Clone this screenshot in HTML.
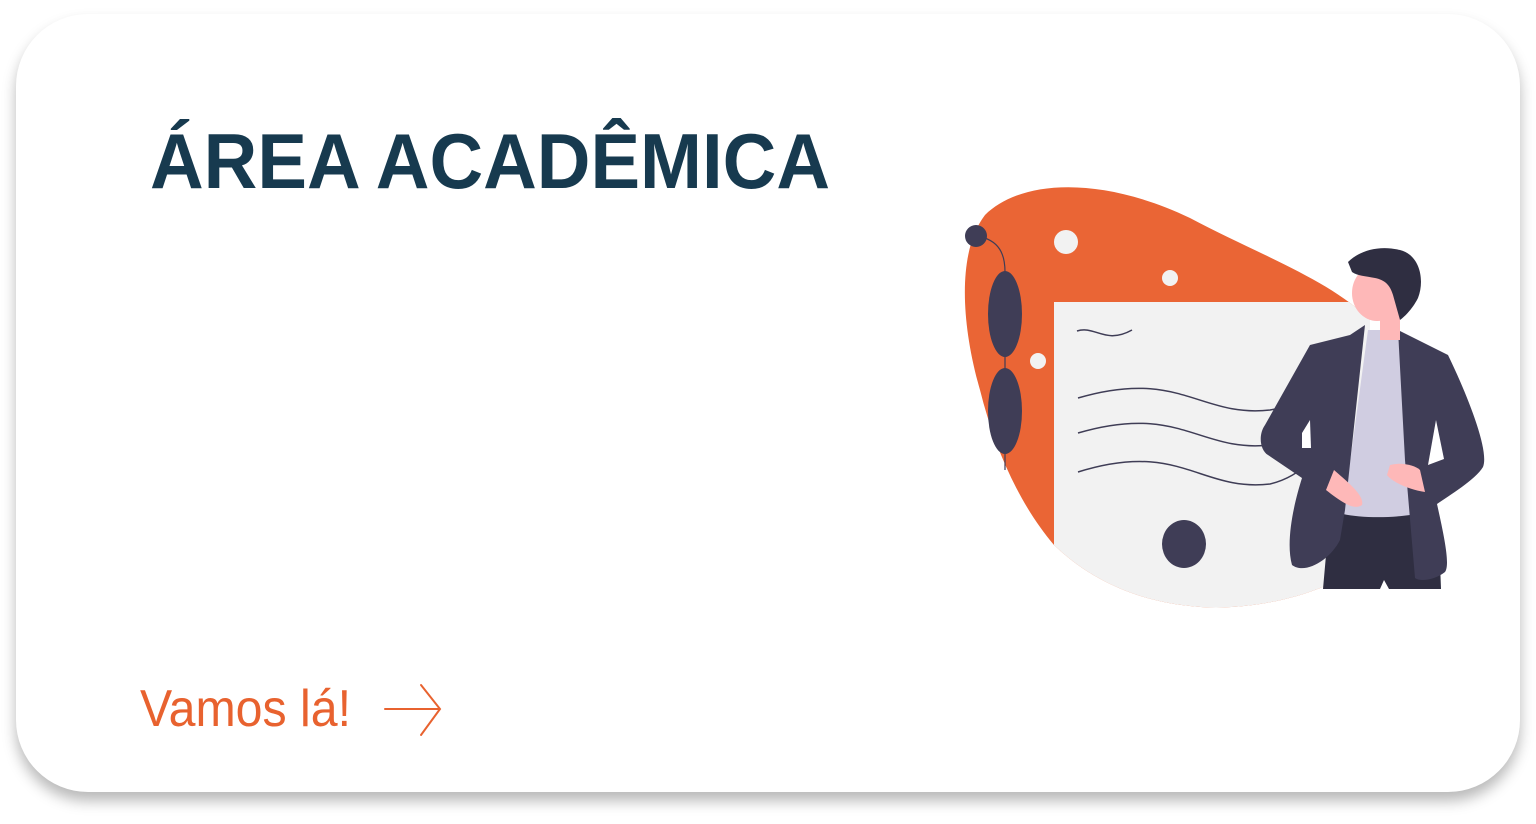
<!DOCTYPE html>
<html><head><meta charset="utf-8">
<style>
html,body{margin:0;padding:0;background:#fff;width:1536px;height:824px;overflow:hidden}
.card{position:absolute;left:16px;top:14px;width:1504px;height:778px;background:#fff;border-radius:72px;box-shadow:0 9px 14px rgba(0,0,0,0.28)}
svg{position:absolute;left:0;top:0}
</style></head><body>
<div class="card"></div>
<svg width="1536" height="824" viewBox="0 0 1536 824">
<defs>
<clipPath id="blob"><path id="bp" d="M985,215 C1020,180 1100,175 1190,218 C1260,255 1330,280 1370,320 L1370,560 C1320,600 1240,612 1190,606 C1130,600 1085,575 1054,545 C1020,505 995,450 980,390 C960,320 958,250 985,215 Z"/></clipPath>
</defs>
<text x="150" y="188" font-family="Liberation Sans, sans-serif" font-weight="bold" font-size="78" fill="#173a4f" textLength="680" lengthAdjust="spacingAndGlyphs">ÁREA ACADÊMICA</text>
<text x="140" y="726" font-family="Liberation Sans, sans-serif" font-size="52" fill="#e8622f" textLength="211" lengthAdjust="spacingAndGlyphs">Vamos lá!</text>
<g stroke="#e8622f" stroke-width="2" fill="none" stroke-linecap="round">
<line x1="385" y1="709" x2="439" y2="709"/><polyline points="421,685 440,709 421,735"/>
</g>
<g clip-path="url(#blob)">
<rect x="900" y="150" width="500" height="500" fill="#ea6535"/>
<rect x="1054" y="302" width="400" height="400" fill="#f2f2f2"/>
</g>
<circle cx="1066" cy="242" r="12" fill="#f2f2f2"/>
<circle cx="1170" cy="278" r="8" fill="#f2f2f2"/>
<circle cx="1038" cy="361" r="8" fill="#f2f2f2"/>
<path d="M977,236 C1000,240 1005,255 1005,272 L1005,470" stroke="#3f3d56" stroke-width="1.2" fill="none"/>
<circle cx="976" cy="236" r="11" fill="#3f3d56"/>
<ellipse cx="1005" cy="314" rx="17" ry="43" fill="#3f3d56"/>
<ellipse cx="1005" cy="411" rx="17" ry="43" fill="#3f3d56"/>
<ellipse cx="1184" cy="544" rx="22" ry="24" fill="#3f3d56"/>
<g stroke="#3f3d56" stroke-width="1.5" fill="none">
<path d="M1077,331 C1095,325 1105,345 1132,330"/>
<path d="M1078,398 C1180,368 1200,418 1270,410 C1300,405 1315,380 1320,375"/>
<path d="M1078,433 C1180,403 1200,453 1270,445 C1290,440 1305,430 1320,420"/>
<path d="M1078,472 C1180,440 1200,492 1270,484 C1295,478 1305,465 1320,455"/>
</g>
<!-- person -->
<path d="M1330,510 L1323,589 L1380,589 L1384,580 L1389,589 L1441,589 L1438,510 Z" fill="#2f2e41"/>
<path d="M1368,330 L1398,330 L1410,515 C1390,518 1360,518 1343,514 Z" fill="#d0cde1"/>
<path d="M1365,325 L1345,510 L1340,540 C1330,560 1305,575 1292,565 C1285,540 1295,500 1302,478 L1268,455 C1260,450 1258,435 1265,425 L1310,345 L1350,335 Z" fill="#3f3d56"/>
<path d="M1302,448 L1302,433 L1310,420 L1311,448 Z" fill="#fff"/>
<path d="M1398,330 L1448,355 C1465,390 1490,450 1483,467 C1475,480 1450,495 1437,504 C1445,540 1450,565 1445,572 C1435,580 1420,582 1415,578 L1405,460 Z" fill="#3f3d56"/>
<path d="M1436,420 L1428,465 L1444,459 Z" fill="#fff"/>
<path d="M1334,470 C1345,480 1365,495 1362,505 C1355,510 1345,505 1326,490 Z" fill="#feb8b8"/>
<path d="M1390,465 C1400,462 1415,465 1420,470 L1425,492 C1410,490 1392,482 1387,475 Z" fill="#feb8b8"/>
<path d="M1380,305 L1380,340 L1400,340 L1400,305 Z" fill="#feb8b8"/>
<ellipse cx="1377" cy="293" rx="25" ry="28" fill="#feb8b8"/>
<path d="M1348,262 C1360,250 1380,245 1400,250 C1420,255 1425,280 1418,298 C1412,310 1403,318 1400,320 L1393,295 C1390,285 1385,280 1375,278 C1365,276 1358,276 1352,272 Z" fill="#2f2e41"/>
</svg>
</body></html>
